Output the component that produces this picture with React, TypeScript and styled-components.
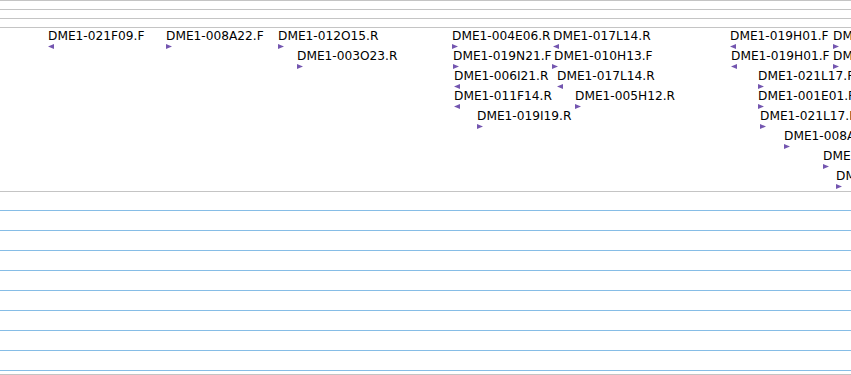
import styled, { createGlobalStyle } from "styled-components";

const GlobalStyle = createGlobalStyle`
  html, body {
    margin: 0;
    padding: 0;
    background: #ffffff;
    overflow: hidden;
  }
`;

type Feature = {
  name: string;
  row: number;
  labelX: number;
  arrowX: number;
  strand: "+" | "-";
};

const features: Feature[] = [
  { name: "DME1-021F09.F", row: 0, labelX: 48, arrowX: 48, strand: "-" },
  { name: "DME1-008A22.F", row: 0, labelX: 166, arrowX: 166, strand: "+" },
  { name: "DME1-012O15.R", row: 0, labelX: 278, arrowX: 278, strand: "+" },
  { name: "DME1-004E06.R", row: 0, labelX: 452, arrowX: 452, strand: "+" },
  { name: "DME1-017L14.R", row: 0, labelX: 553, arrowX: 553, strand: "-" },
  { name: "DME1-019H01.F", row: 0, labelX: 730, arrowX: 730, strand: "-" },
  { name: "DME1-019H02.R", row: 0, labelX: 833, arrowX: 833, strand: "+" },

  { name: "DME1-003O23.R", row: 1, labelX: 297, arrowX: 297, strand: "+" },
  { name: "DME1-019N21.F", row: 1, labelX: 453, arrowX: 453, strand: "+" },
  { name: "DME1-010H13.F", row: 1, labelX: 554, arrowX: 552, strand: "+" },
  { name: "DME1-019H01.F", row: 1, labelX: 731, arrowX: 731, strand: "-" },
  { name: "DME1-019H02.F", row: 1, labelX: 833, arrowX: 833, strand: "+" },

  { name: "DME1-006I21.R", row: 2, labelX: 454, arrowX: 454, strand: "-" },
  { name: "DME1-017L14.R", row: 2, labelX: 557, arrowX: 557, strand: "-" },
  { name: "DME1-021L17.F", row: 2, labelX: 758, arrowX: 758, strand: "+" },

  { name: "DME1-011F14.R", row: 3, labelX: 454, arrowX: 454, strand: "-" },
  { name: "DME1-005H12.R", row: 3, labelX: 575, arrowX: 575, strand: "+" },
  { name: "DME1-001E01.F", row: 3, labelX: 758, arrowX: 758, strand: "+" },

  { name: "DME1-019I19.R", row: 4, labelX: 477, arrowX: 477, strand: "+" },
  { name: "DME1-021L17.R", row: 4, labelX: 760, arrowX: 760, strand: "+" },

  { name: "DME1-008A22.R", row: 5, labelX: 784, arrowX: 784, strand: "+" },
  { name: "DME1-003O23.F", row: 6, labelX: 823, arrowX: 823, strand: "+" },
  { name: "DME1-012O15.F", row: 7, labelX: 836, arrowX: 836, strand: "+" },
];

const ROW_HEIGHT = 20;

const StrandArrow = ({ strand, x, top }: { strand: "+" | "-"; x: number; top: number }) => (
  <ArrowSvg width="6" height="5" viewBox="0 0 6 5" style={{ left: x, top }}>
    <polygon
      points={strand === "+" ? "0,0 6,2.5 0,5" : "6,0 0,2.5 6,5"}
      fill="#7456b0"
    />
  </ArrowSvg>
);

const App = () => {
  return (
    <>
      <GlobalStyle />
      <Page>
        <Ruler>
          <RulerRow />
          <RulerRow />
          <RulerRow />
        </Ruler>
        <Track>
          {features.map((f, i) => (
            <div key={i}>
              <Label style={{ left: f.labelX, top: 1 + f.row * ROW_HEIGHT }}>
                {f.name}
              </Label>
              <StrandArrow
                strand={f.strand}
                x={f.arrowX}
                top={16 + f.row * ROW_HEIGHT}
              />
            </div>
          ))}
        </Track>
        <Lanes>
          {Array.from({ length: 9 }).map((_, i) => (
            <Lane key={i} />
          ))}
        </Lanes>
      </Page>
    </>
  );
};

export default App;

const Page = styled.div`
  width: 851px;
  height: 375px;
  display: flex;
  flex-direction: column;
  overflow: hidden;
  background: #ffffff;
`;

const Ruler = styled.div`
  display: flex;
  flex-direction: column;
`;

const RulerRow = styled.div`
  height: 9px;
  box-sizing: border-box;
  border-top: 1px solid #c4c4c4;
`;

const Track = styled.div`
  position: relative;
  height: 165px;
  box-sizing: border-box;
  border-top: 1px solid #c4c4c4;
  border-bottom: 1px solid #c4c4c4;
  overflow: hidden;
`;

const Label = styled.span`
  position: absolute;
  white-space: nowrap;
  font-family: "DejaVu Sans", sans-serif;
  font-size: 12.2px;
  line-height: 14px;
  color: #000000;
`;

const ArrowSvg = styled.svg`
  position: absolute;
  display: block;
`;

const Lanes = styled.div`
  height: 183px;
  box-sizing: border-box;
  padding-top: 18px;
  border-bottom: 1px solid #c4c4c4;
  overflow: hidden;
  display: flex;
  flex-direction: column;
`;

const Lane = styled.div`
  flex: 0 0 20px;
  box-sizing: border-box;
  border-top: 1px solid #86bde6;
`;
